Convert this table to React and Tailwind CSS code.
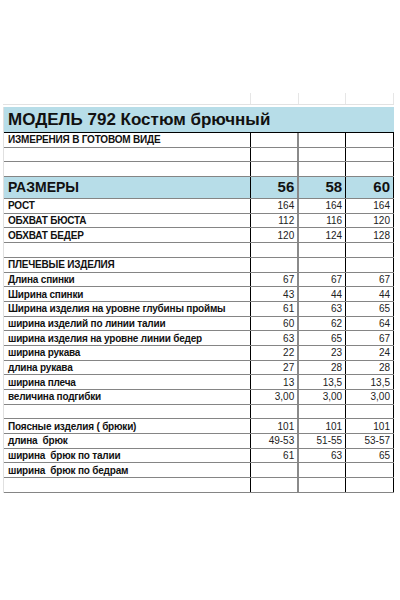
import React from "react";

const rows = [
  { label: "ИЗМЕРЕНИЯ В ГОТОВОМ ВИДЕ", v: ["", "", ""] },
  { label: "", v: ["", "", ""] },
  { label: "", v: ["", "", ""] },
  { label: "РАЗМЕРЫ", v: ["56", "58", "60"], head: true },
  { label: "РОСТ", v: ["164", "164", "164"] },
  { label: "ОБХВАТ БЮСТА", v: ["112", "116", "120"] },
  { label: "ОБХВАТ БЕДЕР", v: ["120", "124", "128"] },
  { label: "", v: ["", "", ""] },
  { label: "ПЛЕЧЕВЫЕ ИЗДЕЛИЯ", v: ["", "", ""] },
  { label: "Длина спинки", v: ["67", "67", "67"] },
  { label: "Ширина спинки", v: ["43", "44", "44"] },
  { label: "Ширина изделия на уровне глубины проймы", v: ["61", "63", "65"] },
  { label: "ширина изделий по линии талии", v: ["60", "62", "64"] },
  { label: "ширина изделия на уровне линии бедер", v: ["63", "65", "67"] },
  { label: "ширина рукава", v: ["22", "23", "24"] },
  { label: "длина рукава", v: ["27", "28", "28"] },
  { label: "ширина плеча", v: ["13", "13,5", "13,5"] },
  { label: "величина подгибки", v: ["3,00", "3,00", "3,00"] },
  { label: "", v: ["", "", ""] },
  { label: "Поясные изделия ( брюки)", v: ["101", "101", "101"] },
  { label: "длина  брюк", v: ["49-53", "51-55", "53-57"] },
  { label: "ширина  брюк по талии", v: ["61", "63", "65"] },
  { label: "ширина  брюк по бедрам", v: ["", "", ""] },
  { label: "", v: ["", "", ""] },
];

const colW = ["w-[48px]", "w-[47px]", "w-[48px]"];

function Row({ row }) {
  const h = row.head ? "h-[22px] bg-[#b7dde8]" : "h-[14.7px]";
  return (
    <div className={`flex border-b border-[#858585] ${h}`}>
      <div
        className={`w-[248px] pl-[4px] flex items-center border-r border-black whitespace-pre font-bold text-[#111] ${
          row.head ? "text-[14px]" : "text-[10px] tracking-[-0.2px]"
        }`}
      >
        {row.label}
      </div>
      {row.v.map((x, i) => (
        <div
          key={i}
          className={`${colW[i]} ${
            i === 0 ? "border-r-2 border-[#8a8a8a]" : "border-r border-black"
          } flex items-center justify-end pr-[3px] ${
            row.head ? "text-[15px] font-bold text-[#111]" : "text-[10px] text-[#222]"
          }`}
        >
          {x}
        </div>
      ))}
    </div>
  );
}

export default function App() {
  return (
    <div
      className="w-[400px] h-[600px] bg-white overflow-hidden"
      style={{ fontFamily: '"Liberation Sans", Arial, sans-serif' }}
    >
      <div className="h-[93px]" />
      <div className="ml-[3px] w-[391px] flex h-[12px] border-b border-[#e2e2e2]">
        <div className="w-[248px] border-r border-[#e6e6e6]" />
        <div className="w-[48px] border-r border-[#e6e6e6]" />
        <div className="w-[47px] border-r border-[#e6e6e6]" />
        <div className="w-[48px] border-r border-[#e6e6e6]" />
      </div>
      <div className="h-[2px]" />
      <div className="ml-[3px] w-[391px] border-l border-[#e0e0e0]">
        <div className="h-[26px] bg-[#b7dde8] border-b border-black flex items-center pl-[4px] text-[17px] font-bold text-[#111] leading-none">
          МОДЕЛЬ 792 Костюм брючный
        </div>
        {rows.map((r, i) => (
          <Row key={i} row={r} />
        ))}
      </div>
    </div>
  );
}
